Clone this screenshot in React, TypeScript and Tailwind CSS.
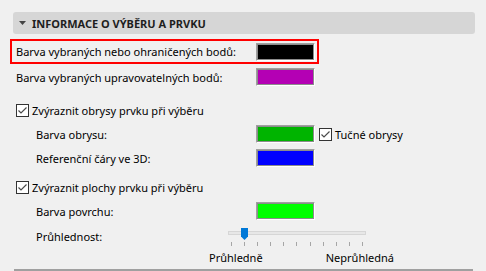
import React from 'react';

function Swatch({ color }: { color: string }) {
  return (
    <div className="w-[59px] h-[18px] border border-t-[#a0a0a0] border-l-[#a0a0a0] border-r-white border-b-white">
      <div className="w-full h-full border border-[#8c8c8c]" style={{ backgroundColor: color }} />
    </div>
  );
}

function Check() {
  return (
    <div className="w-[13px] h-[13px] shrink-0 border border-[#333333] bg-white flex items-center justify-center">
      <svg width="11" height="11" viewBox="0 0 11 11">
        <path d="M1.5 5.5 L4 8 L9.5 2.5" fill="none" stroke="#4a4a4a" strokeWidth="1.2" />
      </svg>
    </div>
  );
}

const ticks = Array.from({ length: 11 }, (_, i) => i);

export default function App() {
  return (
    <div
      className="w-[486px] h-[271px] bg-[#f0f0f0] text-black text-[11px] leading-none overflow-hidden"
      style={{ fontFamily: '"Noto Sans", "DejaVu Sans", sans-serif' }}
    >
      <div className="pl-[13px] pr-[11px] pt-[12px]">
        {/* section header */}
        <div className="h-[22px] rounded-[3px] bg-[#d6d6d6] flex items-center">
          <svg width="7" height="4" viewBox="0 0 7 4" className="ml-[6px]">
            <path d="M0 0 H7 L3.5 4 Z" fill="#444444" />
          </svg>
          <span className="ml-[6px] font-bold text-[#1e1e1e] text-[11px]">INFORMACE O VÝBĚRU A PRVKU</span>
        </div>

        {/* highlighted row */}
        <div className="mt-[5px] -ml-[3px] w-[309px] h-[25px] border-2 border-[#ff0000] flex items-center pl-[4px]">
          <span className="w-[240px]">Barva vybraných nebo ohraničených bodů:</span>
          <Swatch color="#000000" />
        </div>

        <div className="h-[26px] flex items-center pl-[3px]">
          <span className="w-[240px]">Barva vybraných upravovatelných bodů:</span>
          <Swatch color="#b400b4" />
        </div>

        <div className="mt-[8px] h-[24px] flex items-center pl-[3px] gap-[3px]">
          <Check />
          <span>Zvýraznit obrysy prvku při výběru</span>
        </div>
        <div className="h-[24px] flex items-center pl-[23px]">
          <span className="w-[220px]">Barva obrysu:</span>
          <Swatch color="#00b400" />
          <div className="ml-[4px] flex items-center gap-[3px]">
            <Check />
            <span>Tučné obrysy</span>
          </div>
        </div>
        <div className="h-[24px] flex items-center pl-[23px]">
          <span className="w-[220px]">Referenční čáry ve 3D:</span>
          <Swatch color="#0000ff" />
        </div>

        <div className="mt-[5px] h-[24px] flex items-center pl-[3px] gap-[3px]">
          <Check />
          <span>Zvýraznit plochy prvku při výběru</span>
        </div>
        <div className="h-[24px] flex items-center pl-[23px]">
          <span className="w-[220px]">Barva povrchu:</span>
          <Swatch color="#00ff00" />
        </div>

        <div className="mt-[1px] h-[24px] flex items-center pl-[23px]">
          <span className="w-[192px]">Průhlednost:</span>
          <div className="relative w-[138px] h-[24px]">
            <div className="absolute left-0 top-[7px] w-[138px] h-[4px] bg-[#e7e7e7] border border-[#d6d6d6]" />
            <svg width="7" height="12" viewBox="0 0 7 12" className="absolute left-[13px] top-[4px]">
              <path d="M0 0 H7 V8.5 L3.5 12 L0 8.5 Z" fill="#0078d7" />
            </svg>
            <div className="absolute left-[3px] top-[18px] w-[132px] flex justify-between">
              {ticks.map((t) => (
                <div key={t} className="w-px h-[4px] bg-[#a6a6a6]" />
              ))}
            </div>
          </div>
        </div>

        <div className="h-[18px] flex items-center pl-[196px] w-[381px] justify-between">
          <span>Průhledně</span>
          <span>Neprůhledná</span>
        </div>

        <div className="mt-[3px] ml-[1px] w-[459px] h-[2px] bg-[#a0a0a0]" />
      </div>
    </div>
  );
}
